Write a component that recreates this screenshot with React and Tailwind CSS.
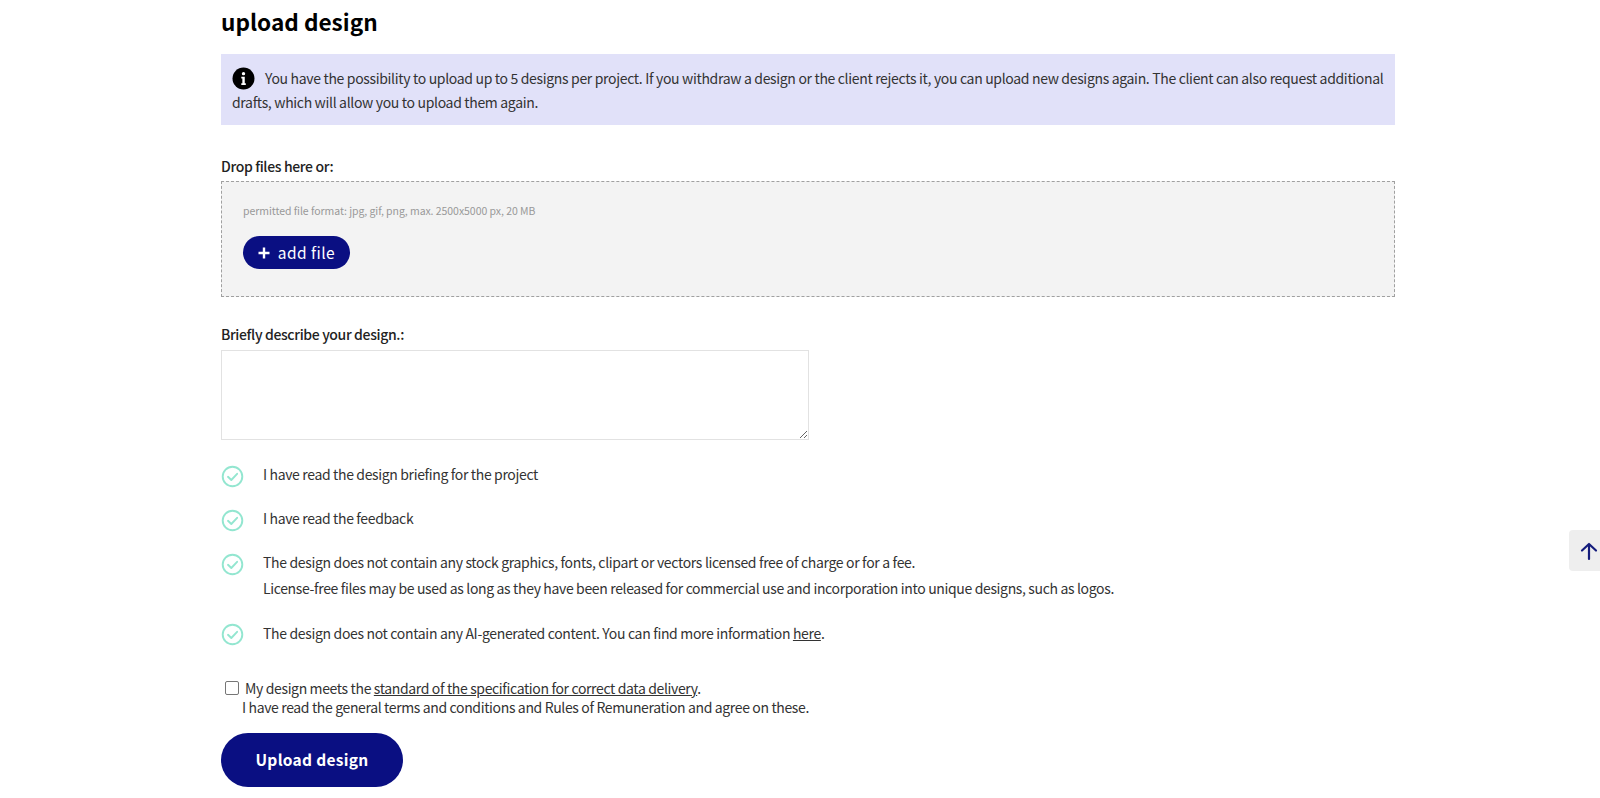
import React from "react";

const font = { fontFamily: '"Noto Sans CJK JP", "Noto Sans", sans-serif' };

function Check() {
  return (
    <svg className="shrink-0" width="23" height="23" viewBox="0 0 23 23" fill="none" stroke="#93e6d0" strokeWidth="1.9" strokeLinecap="round" strokeLinejoin="round">
      <circle cx="11.5" cy="11.5" r="9.8" />
      <path d="M7 11.8l3.3 3.2 5.8-6.2" />
    </svg>
  );
}

function Row({ className = "", children }) {
  return (
    <div className={`flex gap-[19px] ${className}`}>
      <div className="pt-[3px]"><Check /></div>
      <div className="text-[14px] leading-[26px] tracking-[-0.35px] text-[#333]">{children}</div>
    </div>
  );
}

export default function App() {
  return (
    <div className="relative h-[798px] overflow-hidden bg-white text-[#222]" style={font}>
      <main className="ml-[221px] w-[1174px]">
        <h1 className="pt-[6px] pb-[1px] text-[22.6px] leading-[32px] font-bold text-black">upload design</h1>

        <div className="mt-[15px] h-[71px] bg-[#e1e1f9] pl-[11px] pr-[4px] pt-[12px] text-[14px] leading-[24px] tracking-[-0.33px] text-[#333]">
          <svg className="mr-[10px] inline-block align-[-6px]" width="23" height="23" viewBox="0 0 22 22">
            <circle cx="11" cy="11" r="10.5" fill="#000" />
            <circle cx="11" cy="6.4" r="1.6" fill="#fff" />
            <path d="M8.9 9.4h3.3v6.2h1v1.5H8.9v-1.5h1v-4.7h-1z" fill="#fff" />
          </svg>
          You have the possibility to upload up to 5 designs per project. If you withdraw a design or the client rejects it, you can upload new designs again. The client can also request additional drafts, which will allow you to upload them again.
        </div>

        <div className="mt-[31px] text-[14px] leading-[20px] font-medium tracking-[-0.35px]">Drop files here or:</div>
        <div className="mt-[5px] h-[116px] border border-dashed border-[#a0a0a0] bg-[#f3f3f3] pl-[21px] pt-[21px]">
          <div className="text-[10.5px] leading-[16px] tracking-[-0.05px] text-[#999]">permitted file format: jpg, gif, png, max. 2500x5000 px, 20 MB</div>
          <button className="mt-[17px] flex h-[33px] w-[107px] items-center justify-center gap-[8px] rounded-full bg-[#0a0f82] text-[15.5px] tracking-[0.45px] text-white">
            <svg width="12" height="12" viewBox="0 0 12 12" stroke="#fff" strokeWidth="2.4"><path d="M6 .5v11M.5 6h11" /></svg>
            add file
          </button>
        </div>

        <div className="mt-[27px] pb-[1px] text-[14px] leading-[20px] font-medium tracking-[-0.35px]">Briefly describe your design.:</div>
        <textarea className="mt-[5px] block h-[90px] w-[588px] border border-[#e2e2e2] bg-white" />

        <div className="mt-[22px]">
          <Row className="h-[44px]"><div className="-mt-[1px]">I have read the design briefing for the project</div></Row>
          <Row className="h-[44px]"><div className="-mt-[1px]">I have read the feedback</div></Row>
          <Row className="h-[70px]">
            <div className="-mt-[1px] tracking-[-0.33px]">The design does not contain any stock graphics, fonts, clipart or vectors licensed free of charge or for a fee.</div>
            <div>License-free files may be used as long as they have been released for commercial use and incorporation into unique designs, such as logos.</div>
          </Row>
          <Row className="h-[44px]">
            <div className="tracking-[-0.33px]">The design does not contain any AI-generated content. You can find more information <span className="underline">here</span>.</div>
          </Row>
        </div>

        <div className="mt-[14px] text-[14px] leading-[20px] tracking-[-0.36px] text-[#333]">
          <div className="flex items-center pl-[4px]">
            <span className="mr-[6px] h-[14px] w-[14px] rounded-[2px] border border-[#767676] bg-white" />
            <span>My design meets the <span className="underline">standard of the specification for correct data delivery</span>.</span>
          </div>
          <div className="-mt-[1px] pl-[21px]">I have read the general terms and conditions and Rules of Remuneration and agree on these.</div>
        </div>

        <button className="mt-[16px] h-[54px] w-[182px] rounded-full bg-[#0a0f82] text-[15.5px] font-bold tracking-[0.3px] text-white">Upload design</button>
      </main>

      <div className="absolute left-[1569px] top-[530px] flex h-[41px] w-[31px] items-center rounded-l-[4px] bg-[#eeeeee] pl-[10px]">
        <svg className="shrink-0" width="20" height="20" viewBox="0 0 20 20" fill="none" stroke="#141c7c" strokeWidth="2.2" strokeLinecap="round" strokeLinejoin="round">
          <path d="M10 18V3M3 9.5L10 3l7 6.5" />
        </svg>
      </div>
    </div>
  );
}
